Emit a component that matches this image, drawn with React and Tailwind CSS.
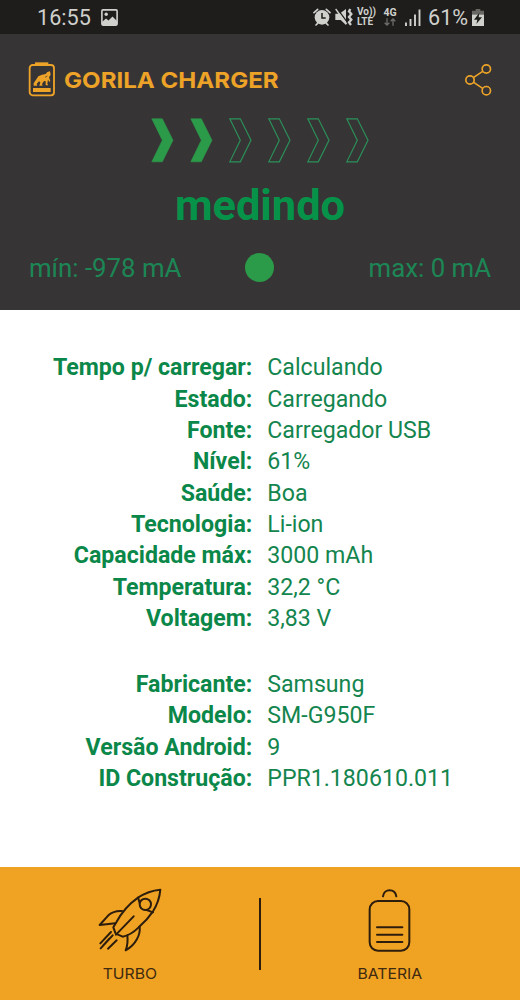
import React from "react";

const status = [
    ['Tempo p/ carregar:', 'Calculando'],
    ['Estado:', 'Carregando'],
    ['Fonte:', 'Carregador USB'],
    ['Nível:', '61%'],
    ['Saúde:', 'Boa'],
    ['Tecnologia:', 'Li-ion'],
    ['Capacidade máx:', '3000 mAh'],
    ['Temperatura:', '32,2 °C'],
    ['Voltagem:', '3,83 V'],
];

const device = [
    ['Fabricante:', 'Samsung'],
    ['Modelo:', 'SM-G950F'],
    ['Versão Android:', '9'],
    ['ID Construção:', 'PPR1.180610.011'],
];

const PictureIcon = () => (
    <svg className="w-[17px] h-[17px]" viewBox="0 0 17 17">
        <rect x="0.9" y="0.9" width="15.2" height="15.2" rx="1" fill="none" stroke="#d0d0cd" strokeWidth="1.6"/>
        <circle cx="5.2" cy="5.2" r="1.7" fill="#d0d0cd"/>
        <path d="M1 13 L5 9.5 L7.5 11.5 L11.5 7.5 L16 12 V16 H1 Z" fill="#d0d0cd"/>
    </svg>
)

const AlarmIcon = () => (
    <svg className="w-[18px] h-[18px]" viewBox="0 0 54 54">
        <path d="M3 14 L14 4 M51 14 L40 4 M14 46 L9 51 M40 46 L45 51" stroke="#d0d0cd" strokeWidth="5"
              strokeLinecap="round"/>
        <circle cx="27" cy="28" r="22" fill="#d0d0cd"/>
        <path d="M27 15 V30 H38" fill="none" stroke="#1e1d1b" strokeWidth="4.5"/>
    </svg>
)

const MuteIcon = () => (
    <svg className="w-[18px] h-[18px]" viewBox="0 0 54 54">
        <path d="M1 17 H13 L33 3 V51 L17 36 H1 Z" fill="#d0d0cd"/>
        <path d="M5 0 L37 43" stroke="#1e1d1b" strokeWidth="4"/>
        <path d="M2 3 L35 48" stroke="#d0d0cd" strokeWidth="4"/>
        <path d="M46 3 L42 10 L49 18 L42 27 L49 35 L42 43 L48 51"
              fill="none" stroke="#d0d0cd" strokeWidth="7"/>
    </svg>
)

const DataArrows = () => (
    <svg className="w-[12px] h-[8px]" viewBox="0 0 36 24">
        <path d="M9 1 V21 M2 14 L9 21 L16 14 M27 23 V3 M20 10 L27 3 L34 10" fill="none" stroke="#6d6c69"
              strokeWidth="4"/>
    </svg>
)

const SignalIcon = () => (
    <svg className="w-[16px] h-[17px]" viewBox="0 0 16 17">
        <path d="M1 13.5 V17 M5.5 10 V17 M10 5.5 V17 M14.5 0.5 V17" stroke="#d0d0cd" strokeWidth="1.9"/>
    </svg>
)

const ChargeIcon = () => (
    <svg className="w-[12px] h-[17px]" viewBox="0 0 36 51">
        <path d="M11 0 H25 V5 H36 V20 H0 V5 H11 Z" fill="#686764"/>
        <path d="M0 17 H36 V51 H0 Z" fill="#d0d0cd"/>
        <path d="M22 11 L6 32 H16 L13 45 L30 25 H20 Z" fill="#1e1d1b"/>
    </svg>
)

const Logo = () => (
    <svg className="w-[27px] h-[35px] shrink-0" viewBox="0 0 81 105">
        <path d="M21 1 H61 V11 H21 Z" fill="#eda327"/>
        <rect x="5" y="9" width="73" height="91" rx="9" fill="none" stroke="#eda327" strokeWidth="5.5"/>
        <path d="M15 78 H68 V90 H15 Z" fill="#eda327"/>
        <path d="M66 28 L58 30 L53 36 L42 38 L31 43 L25 52 L17 64 V71 H28 L26 66 L33 58 L37 61 L34 71 H44 L42 66 L48 57 L53 58 V70 H61 L58 65 L60 53 L64 60 L67 57 L63 46 L68 38 Z"
              fill="#eda327"/>
        <path d="M51 46 L58 42" stroke="#373436" strokeWidth="2"/>
    </svg>
)

const ShareIcon = () => (
    <svg className="w-[27px] h-[33px]" viewBox="0 0 81 99" fill="none" stroke="#eda327" strokeWidth="5">
        <circle cx="64" cy="18" r="12.5"/>
        <circle cx="15" cy="51" r="12.5"/>
        <circle cx="64" cy="83" r="12.5"/>
        <path d="M26 43 L53 25 M26 58 L53 76"/>
    </svg>
)

const Chevron = ({filled}) => (
    <svg className="w-[23px] h-[45px]" viewBox="0 0 23 45">
        <path d="M0.8 0.8 H11.3 L22 22.2 L11.3 43.8 H0.8 L11.3 22.2 Z" fill={filled ? '#2b9a49' : 'none'}
              stroke={filled ? '#2b9a49' : '#2a9259'} strokeWidth={filled ? 0.6 : 1.15}/>
    </svg>
)

const Rocket = () => (
    <svg className="w-[64px] h-[64px]" viewBox="54 69 192 192" fill="none" stroke="#2c1d0d" strokeWidth="6"
         strokeLinecap="round" strokeLinejoin="round">
        <path d="M241 74 Q205 77 174 98 Q133 127 109 172 L100 187 L107 206 L128 215 Q153 210 176 187 Q203 163 219 139 Q238 109 241 74 Z"/>
        <path d="M174 98 L184 129 L219 142"/>
        <circle cx="196" cy="118" r="17" fill="#f0a323"/>
        <path d="M126 138 Q102 136 85 151 L59 180 L106 175"/>
        <path d="M142 211 Q145 235 137 256 Q160 243 171 222 Q181 205 179 185"/>
        <path d="M161 154 L108 209 M93 201 L61 235 M98 211 L62 250 M88 221 L69 242 M110 226 L84 251"/>
    </svg>
)

const BatteryPack = () => (
    <svg className="w-[43px] h-[64px]" viewBox="383 69 129 192" fill="none" stroke="#2c1d0d" strokeWidth="6"
         strokeLinecap="round">
        <rect x="388" y="108" width="119" height="149" rx="25"/>
        <path d="M428 94 C431 70 464 70 468 94"/>
        <path d="M410 187 H486 M410 209 H486 M410 231 H486"/>
    </svg>
)

const Rows = ({items}) => (
    <dl>
        {items.map(([label, value]) => (
            <div key={label} className="flex gap-[15px] h-[31.33px] text-[23.15px] leading-[31.33px]">
                <dt className="w-[252.3px] text-right font-bold whitespace-nowrap text-[#0b8849]">{label}</dt>
                <dd className="whitespace-nowrap text-[#14854e]">{value}</dd>
            </div>
        ))}
    </dl>
)

const App = () => {
    return (
        <div className="w-[520px] h-[1000px] flex flex-col bg-white font-['Roboto',sans-serif] overflow-hidden">
            <div className="h-[34px] shrink-0 flex items-center bg-[#1e1d1b] text-[#d0d0cd] pl-[37px] pr-[36px]">
                <span className="text-[21.6px] leading-[34px] w-[64px] pt-[1px]">16:55</span>
                <PictureIcon/>
                <div className="ml-auto flex items-center">
                    <AlarmIcon/>
                    <div className="ml-[4px]"><MuteIcon/></div>
                    <div className="ml-[4px] w-[19px] text-[10px] leading-[10px] font-bold">
                        <div className="whitespace-nowrap">Vo))</div>
                        <div>LTE</div>
                    </div>
                    <div className="ml-[6px] w-[16px] flex flex-col items-center text-[10.5px] leading-[10px] font-bold">
                        <span>4G</span>
                        <DataArrows/>
                    </div>
                    <div className="ml-[7px]"><SignalIcon/></div>
                    <span className="ml-[7px] w-[44px] text-[21.6px] leading-[34px] pt-[1px]">61%</span>
                    <ChargeIcon/>
                </div>
            </div>

            <header className="h-[276px] shrink-0 flex flex-col bg-[#373436]">
                <div className="h-[84px] pt-[28px] px-[28px] flex items-start">
                    <Logo/>
                    <h1 className="ml-[9px] mt-[2px] text-[22px] leading-[32px] font-bold font-['Inter',sans-serif] text-[#eda327] whitespace-nowrap origin-left scale-x-[1.095]">
                        GORILA CHARGER
                    </h1>
                    <div className="ml-auto mt-[1px]"><ShareIcon/></div>
                </div>
                <div className="flex justify-between h-[45px] w-[218px] ml-[151px]">
                    {[1, 2, 3, 4, 5, 6].map((n) => <Chevron key={n} filled={n <= 2}/>)}
                </div>
                <p className="mt-[17px] text-center text-[43.4px] leading-[52px] font-bold text-[#079249]">medindo</p>
                <div className="mt-[19px] px-[29px] grid grid-cols-[1fr_30px_1fr] items-center text-[25.8px] leading-[32px] text-[#1c8755]">
                    <span className="pt-[1px]">mín: -978 mA</span>
                    <span className="w-[29px] h-[29px] rounded-full bg-[#2b9a49]"/>
                    <span className="pt-[1px] text-right">max: 0 mA</span>
                </div>
            </header>

            <main className="flex-1 pt-[42.4px] flex flex-col gap-[34.5px]">
                <Rows items={status}/>
                <Rows items={device}/>
            </main>

            <footer className="h-[133px] shrink-0 flex bg-[#f0a323] text-[#402a10] text-[15px] leading-[20px] font-['Inter',sans-serif]">
                <div className="w-[259px] pt-[21px] flex flex-col items-center">
                    <Rocket/>
                    <span className="mt-[12px] scale-x-[1.05]">TURBO</span>
                </div>
                <div className="w-[2px] h-[72px] mt-[31px] bg-[#2c1d0d]"/>
                <div className="w-[257px] pt-[21px] flex flex-col items-center">
                    <BatteryPack/>
                    <span className="mt-[12px] scale-x-[1.05]">BATERIA</span>
                </div>
            </footer>
        </div>
    )
}

export default App;
